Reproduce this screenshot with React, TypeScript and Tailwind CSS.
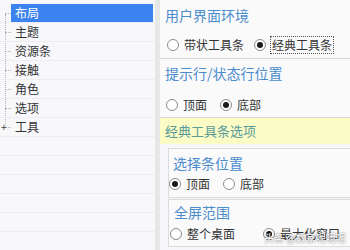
const font = { fontFamily: '"Noto Sans CJK SC", "Noto Sans", sans-serif' }

const treeItems = ['布局', '主题', '资源条', '接触', '角色', '选项', '工具']

function Radio({ checked, label, focus }: { checked?: boolean; label: string; focus?: boolean }) {
  return (
    <div className="flex items-center gap-[5px]">
      <span className="w-[12px] h-[12px] rounded-full border border-[#8c8c8c] bg-white flex items-center justify-center">
        {checked && <span className="w-[6px] h-[6px] rounded-full bg-[#1a1a1a]" />}
      </span>
      <span
        className={`text-[12px] leading-[16px] text-[#333] ${focus ? 'outline outline-1 outline-dotted outline-[#555] px-[1px]' : ''}`}
      >
        {label}
      </span>
    </div>
  )
}

export default function App() {
  return (
    <div className="w-[350px] h-[250px] flex overflow-hidden bg-[#f4f4f6] relative" style={font}>
      {/* tree */}
      <div className="w-[155px] h-full bg-[#f8f8fb] pt-[4px] relative">
        <div className="absolute left-[5px] top-[14px] h-[112px] border-l border-dotted border-[#b5b5b5]" />
        {treeItems.map((t, i) => (
          <div key={t} className="h-[19px] flex items-center border-b border-[#ededf1] relative">
            <span className="w-[6px] ml-[5px] border-t border-dotted border-[#b5b5b5]" />
            {i === treeItems.length - 1 && (
              <span className="absolute left-[1px] top-[2px] text-[10px] leading-[14px] text-[#444]">+</span>
            )}
            <div
              className={`h-full flex items-center pl-[4px] text-[12px] ${
                i === 0 ? 'bg-[#3c83f0] text-white w-[142px]' : 'text-[#333]'
              }`}
            >
              {t}
            </div>
          </div>
        ))}
        {[0, 1, 2, 3, 4, 5].map(i => (
          <div key={i} className="h-[19px] border-b border-[#ededf1]" />
        ))}
      </div>

      {/* divider */}
      <div className="w-[5px] h-full bg-[#e6e8e6]" />

      {/* options */}
      <div className="flex-1 h-full flex flex-col bg-[#f6f6f8]">
        <div className="h-[59px] bg-[#fafafb] border-b border-[#d8d8dc] pl-[5px] pt-[5px]">
          <div className="text-[14px] leading-[20px] text-[#4a8ccc]">用户界面环境</div>
          <div className="flex items-center gap-[10px] mt-[12px] pl-[2px]">
            <Radio label="带状工具条" />
            <Radio label="经典工具条" checked focus />
          </div>
        </div>

        <div className="h-[59px] bg-[#fafafb] border-b border-[#d8d8dc] pl-[5px] pt-[4px]">
          <div className="text-[14px] leading-[20px] text-[#4a8ccc]">提示行/状态行位置</div>
          <div className="flex items-center gap-[13px] mt-[14px] pl-[1px]">
            <Radio label="顶面" />
            <Radio label="底部" checked />
          </div>
        </div>

        <div className="h-[26px] bg-[#fbfbc6] flex items-center pl-[5px] text-[13px] text-[#5a9a9a]">
          经典工具条选项
        </div>

        <div className="flex-1 pl-[8px] pt-[4px] flex flex-col gap-[1px]">
          <div className="h-[50px] bg-[#fafafb] border border-r-0 border-[#dcdce0] pl-[0px] pt-[4px]">
            <div className="text-[14px] leading-[20px] text-[#4a8ccc] pl-[4px]">选择条位置</div>
            <div className="flex items-center gap-[13px] mt-[3px]">
              <Radio label="顶面" checked />
              <Radio label="底部" />
            </div>
          </div>
          <div className="h-[48px] bg-[#fafafb] border border-r-0 border-[#dcdce0] pl-[1px] pt-[2px]">
            <div className="text-[14px] leading-[20px] text-[#4a8ccc] pl-[4px]">全屏范围</div>
            <div className="flex items-center gap-[28px] mt-[4px]">
              <Radio label="整个桌面" />
              <Radio label="最大化窗口" checked />
            </div>
          </div>
        </div>
      </div>

      <div
        className="absolute left-[264px] top-[231px] text-[10px] leading-[14px] text-white whitespace-nowrap"
        style={{ textShadow: '0 0 2px rgba(0,0,0,0.7)' }}
      >
        头条 @数家呢呢呢
      </div>
    </div>
  )
}
